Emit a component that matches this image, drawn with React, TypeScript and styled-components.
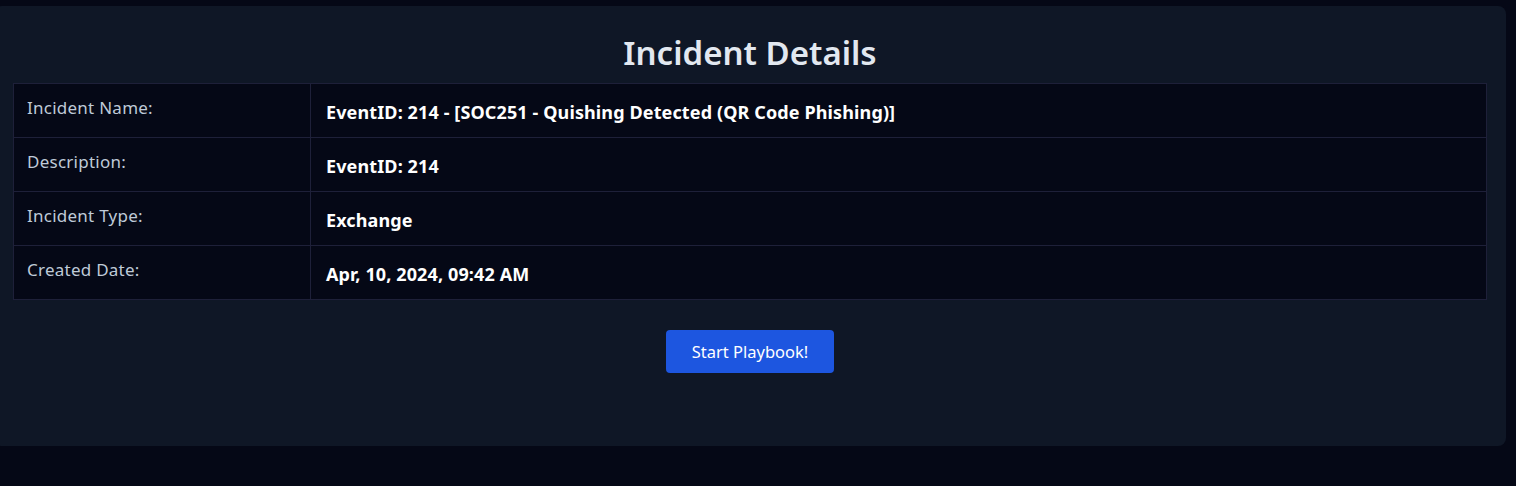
import React from "react";
import styled, { createGlobalStyle } from "styled-components";

const GlobalStyle = createGlobalStyle`
  html, body {
    margin: 0;
    padding: 0;
    background: #050816;
    font-family: "Segoe UI", "Noto Sans", "Open Sans", sans-serif;
  }
  * { box-sizing: border-box; }
`;

const Page = styled.div`
  padding-top: 6px;
  padding-bottom: 40px;
`;

const Card = styled.section`
  margin-left: -6px;
  width: 1512px;
  height: 440px;
  background: #0f1726;
  border-radius: 8px;
  padding: 0 19px;
  display: flex;
  flex-direction: column;
  align-items: stretch;
`;

const Title = styled.h1`
  margin: 0;
  padding-top: 27px;
  height: 77px;
  font-size: 33px;
  font-weight: 600;
  line-height: 40px;
  color: #e2e8f0;
  text-align: center;
`;

const Table = styled.table`
  width: 100%;
  border-collapse: collapse;
  background: #050816;
  border: 1px solid #1e2039;
`;

const Row = styled.tr`
  height: 54px;
`;

const LabelCell = styled.td`
  width: 297px;
  border: 1px solid #1e2039;
  padding: 13px 13px 0;
  vertical-align: top;
  font-size: 17px;
  letter-spacing: 0.25px;
  line-height: 22px;
  color: #bfcad8;
`;

const ValueCell = styled.td`
  border: 1px solid #1e2039;
  padding: 3px 15px 0;
  vertical-align: middle;
  font-size: 18px;
  font-weight: 700;
  letter-spacing: 0.12px;
  line-height: 22px;
  color: #ffffff;
`;

const Actions = styled.div`
  display: flex;
  justify-content: center;
  padding-top: 30px;
`;

const Button = styled.button`
  width: 168px;
  height: 43px;
  background: #1d56e0;
  color: #ffffff;
  border: none;
  border-radius: 4px;
  font-family: inherit;
  font-size: 16.5px;
  cursor: pointer;
`;

const rows: [string, string][] = [
  ["Incident Name:", "EventID: 214 - [SOC251 - Quishing Detected (QR Code Phishing)]"],
  ["Description:", "EventID: 214"],
  ["Incident Type:", "Exchange"],
  ["Created Date:", "Apr, 10, 2024, 09:42 AM"],
];

export default function App() {
  return (
    <Page>
      <GlobalStyle />
      <Card>
        <Title>Incident Details</Title>
        <Table>
          <tbody>
            {rows.map(([label, value]) => (
              <Row key={label}>
                <LabelCell>{label}</LabelCell>
                <ValueCell>{value}</ValueCell>
              </Row>
            ))}
          </tbody>
        </Table>
        <Actions>
          <Button>Start Playbook!</Button>
        </Actions>
      </Card>
    </Page>
  );
}
